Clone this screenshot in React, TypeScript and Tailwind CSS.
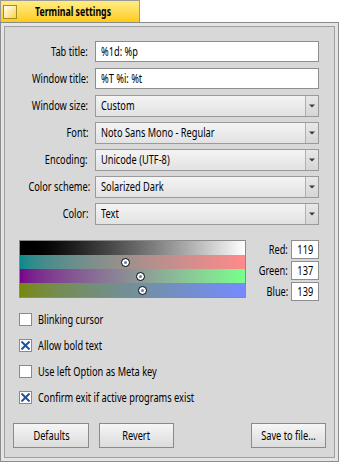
import React from 'react';

const font = "font-['Noto_Sans',sans-serif]";

// Haiku's text here is narrow; squeeze glyphs horizontally to match
const Txt = ({ children, origin = 'origin-left' }: { children: React.ReactNode; origin?: string }) => (
    <span className={`inline-block whitespace-nowrap scale-x-[0.77] ${origin}`}>{children}</span>
);

const TextRow = ({ label, value }: { label: string; value: string }) => (
    <div className="flex items-center h-[22px]">
        <div className="w-[85px] shrink-0 text-right pr-[7px] text-[12px] leading-none">
            <Txt origin="origin-right">{label}</Txt>
        </div>
        <div className="flex-1 h-[21px] self-start bg-white border border-[#8e8e8e] pl-[5px] flex items-center text-[12px] leading-none">
            <Txt>{value}</Txt>
        </div>
    </div>
);

const SelectRow = ({ label, value }: { label: string; value: string }) => (
    <div className="flex items-center h-[22px]">
        <div className="w-[85px] shrink-0 text-right pr-[7px] text-[12px] leading-none">
            <Txt origin="origin-right">{label}</Txt>
        </div>
        <div className="flex-1 h-full flex border border-[#9a9a9a] bg-linear-to-b from-[#f4f4f4] to-[#e2e2e2]">
            <div className="flex-1 pl-[5px] flex items-center text-[12px] leading-none">
                <Txt>{value}</Txt>
            </div>
            <div className="w-[13px] border-l border-[#b0b0b0] bg-linear-to-b from-[#e8e8e8] to-[#d6d6d6] flex items-center justify-center">
                <svg width="6" height="4" viewBox="0 0 6 4">
                    <path d="M0 0.5 H6 L3 3.5 Z" fill="#3a3a3a" />
                </svg>
            </div>
        </div>
    </div>
);

const Thumb = ({ left, top }: { left: number; top: number }) => (
    <div
        className="absolute w-[9px] h-[9px] rounded-full bg-white border border-black flex items-center justify-center"
        style={{ left: left - 4.5, top: top - 4.5 }}
    >
        <div className="w-[3px] h-[3px] rounded-full bg-[#5a7fc0]" />
    </div>
);

const ColorField = ({ label, value }: { label: string; value: string }) => (
    <div className="flex items-center h-[19px]">
        <div className="flex-1 text-right pr-[3px] text-[12px] leading-none">
            <Txt origin="origin-right">{label}</Txt>
        </div>
        <div className="w-[28px] h-full bg-white border border-[#8e8e8e] flex items-center justify-center text-[12px] leading-none">
            <Txt origin="origin-center">{value}</Txt>
        </div>
    </div>
);

const Check = ({ label, checked }: { label: string; checked?: boolean }) => (
    <div className="flex items-center h-[13px]">
        <div className="w-[13px] h-[13px] bg-white border border-[#8a8a8a] flex items-center justify-center">
            {checked && (
                <svg width="9" height="9" viewBox="0 0 9 9">
                    <path d="M1.2 1.2 L7.8 7.8 M7.8 1.2 L1.2 7.8" stroke="#24519c" strokeWidth="2" strokeLinecap="square" />
                </svg>
            )}
        </div>
        <span className="ml-[6px] text-[12px] leading-none">
            <Txt>{label}</Txt>
        </span>
    </div>
);

const Button = ({ label, width }: { label: string; width: string }) => (
    <div className={`${width} h-[25px] border border-[#8a8a8a] bg-linear-to-b from-[#f6f6f6] to-[#dcdcdc] flex items-center justify-center text-[12px] leading-none`}>
        <Txt origin="origin-center">{label}</Txt>
    </div>
);

export default function App() {
    const barW = 225;
    return (
        <div className={`w-[339px] h-[462px] bg-white text-black ${font}`}>
            {/* Tab */}
            <div className="h-[22px] flex">
                <div className="w-[140px] h-full border-l border-t border-r border-[#9a9a9a] bg-linear-to-b from-[#ffed80] to-[#ffcb00] flex items-center">
                    <div className="ml-[2px] w-[14px] h-[14px] shrink-0 border border-[#a38c2a] bg-linear-to-br from-white to-[#ffd21a]" />
                    <div className="ml-[18px] text-[12px] font-bold leading-none">
                        <span className="inline-block whitespace-nowrap scale-x-[0.73] origin-left">Terminal settings</span>
                    </div>
                </div>
            </div>

            {/* Window frame */}
            <div className="h-[440px] border border-[#8c8c8c] bg-[#e4e4e4] p-[3px]">
                <div className="h-full border border-[#a0a0a0] bg-[#d8d8d8] flex flex-col">
                    {/* Fields */}
                    <div className="pt-[14px] pl-[5px] pr-[15px] flex flex-col gap-[5px]">
                        <TextRow label="Tab title:" value="%1d: %p" />
                        <TextRow label="Window title:" value="%T %i: %t" />
                        <SelectRow label="Window size:" value="Custom" />
                        <SelectRow label="Font:" value="Noto Sans Mono - Regular" />
                        <SelectRow label="Encoding:" value="Unicode (UTF-8)" />
                        <SelectRow label="Color scheme:" value="Solarized Dark" />
                        <SelectRow label="Color:" value="Text" />
                    </div>

                    {/* Color control */}
                    <div className="mt-[15px] pl-[14px] pr-[15px] flex">
                        <div className="relative w-[227px] h-[58px] border border-[#8a8a8a] flex flex-col">
                            <div className="h-[14px] bg-linear-to-r from-black to-white" />
                            <div className="h-[14px] bg-linear-to-r from-[#008a8b] to-[#ff898b]" />
                            <div className="h-[14px] bg-linear-to-r from-[#77008b] to-[#77ff8b]" />
                            <div className="h-[14px] bg-linear-to-r from-[#778900] to-[#7789ff]" />
                            <Thumb left={(119 / 255) * barW} top={21} />
                            <Thumb left={(137 / 255) * barW} top={35} />
                            <Thumb left={(139 / 255) * barW} top={49} />
                        </div>
                        <div className="flex-1 flex flex-col gap-[2px]">
                            <ColorField label="Red:" value="119" />
                            <ColorField label="Green:" value="137" />
                            <ColorField label="Blue:" value="139" />
                        </div>
                    </div>

                    {/* Checkboxes */}
                    <div className="mt-[12px] pl-[14px] flex flex-col gap-[13px]">
                        <Check label="Blinking cursor" />
                        <Check label="Allow bold text" checked />
                        <Check label="Use left Option as Meta key" />
                        <Check label="Confirm exit if active programs exist" checked />
                    </div>

                    {/* Buttons */}
                    <div className="mt-[19px] pl-[8px] pr-[8px] flex">
                        <Button label="Defaults" width="w-[76px]" />
                        <div className="w-[10px]" />
                        <Button label="Revert" width="w-[75px]" />
                        <div className="flex-1" />
                        <Button label="Save to file..." width="w-[75px]" />
                    </div>
                </div>
            </div>
        </div>
    );
}
